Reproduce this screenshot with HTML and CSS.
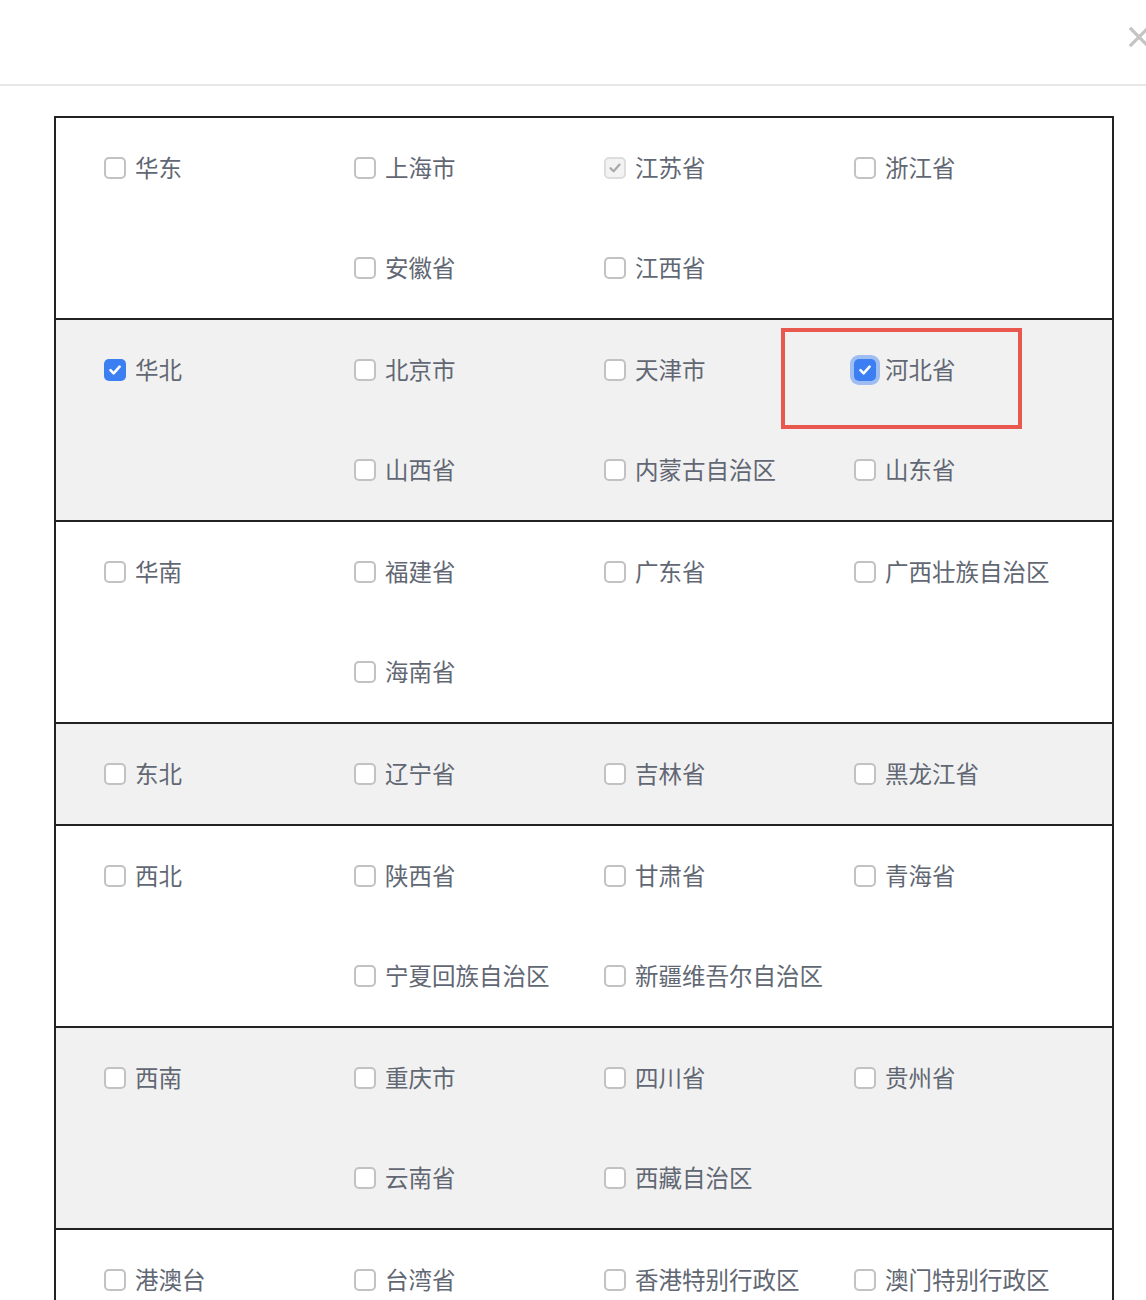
FILE: index.html
```html
<!DOCTYPE html>
<html lang="zh">
<head>
<meta charset="utf-8">
<title>地区选择</title>
<link rel="stylesheet" href="styles.css">
</head>
<body>
<div class="dialog">
  <header class="dialog-header">
    <svg class="close" width="22" height="22" viewBox="0 0 22 22"><path d="M3 3 L19 19 M19 3 L3 19" stroke="#c4c4c4" stroke-width="3.2" stroke-linecap="square"/></svg>
  </header>
  <div class="dialog-body">
    <div class="region-table">
      <div class="region-row">
        <div class="region"><label class="cb"><span class="box"></span><span class="txt">华东</span></label></div>
        <div class="provinces">
          <label class="cb"><span class="box"></span><span class="txt">上海市</span></label>
          <label class="cb"><span class="box disabled-checked"><svg viewBox="0 0 22 22"><path d="M6.5 11.2 L9.6 14.3 L15.6 7.6" fill="none" stroke="#a9a9a9" stroke-width="2.2" stroke-linecap="round" stroke-linejoin="round"/></svg></span><span class="txt">江苏省</span></label>
          <label class="cb"><span class="box"></span><span class="txt">浙江省</span></label>
          <label class="cb"><span class="box"></span><span class="txt">安徽省</span></label>
          <label class="cb"><span class="box"></span><span class="txt">江西省</span></label>
        </div>
      </div>
      <div class="region-row alt">
        <div class="region"><label class="cb"><span class="box checked"><svg viewBox="0 0 22 22"><path d="M6.5 11.2 L9.6 14.3 L15.6 7.6" fill="none" stroke="#fff" stroke-width="2.6" stroke-linecap="round" stroke-linejoin="round"/></svg></span><span class="txt">华北</span></label></div>
        <div class="provinces">
          <label class="cb"><span class="box"></span><span class="txt">北京市</span></label>
          <label class="cb"><span class="box"></span><span class="txt">天津市</span></label>
          <label class="cb highlighted"><span class="mark"></span><span class="box checked focus"><svg viewBox="0 0 22 22"><path d="M6.5 11.2 L9.6 14.3 L15.6 7.6" fill="none" stroke="#fff" stroke-width="2.6" stroke-linecap="round" stroke-linejoin="round"/></svg></span><span class="txt">河北省</span></label>
          <label class="cb"><span class="box"></span><span class="txt">山西省</span></label>
          <label class="cb"><span class="box"></span><span class="txt">内蒙古自治区</span></label>
          <label class="cb"><span class="box"></span><span class="txt">山东省</span></label>
        </div>
      </div>
      <div class="region-row">
        <div class="region"><label class="cb"><span class="box"></span><span class="txt">华南</span></label></div>
        <div class="provinces">
          <label class="cb"><span class="box"></span><span class="txt">福建省</span></label>
          <label class="cb"><span class="box"></span><span class="txt">广东省</span></label>
          <label class="cb"><span class="box"></span><span class="txt">广西壮族自治区</span></label>
          <label class="cb"><span class="box"></span><span class="txt">海南省</span></label>
        </div>
      </div>
      <div class="region-row alt">
        <div class="region"><label class="cb"><span class="box"></span><span class="txt">东北</span></label></div>
        <div class="provinces">
          <label class="cb"><span class="box"></span><span class="txt">辽宁省</span></label>
          <label class="cb"><span class="box"></span><span class="txt">吉林省</span></label>
          <label class="cb"><span class="box"></span><span class="txt">黑龙江省</span></label>
        </div>
      </div>
      <div class="region-row">
        <div class="region"><label class="cb"><span class="box"></span><span class="txt">西北</span></label></div>
        <div class="provinces">
          <label class="cb"><span class="box"></span><span class="txt">陕西省</span></label>
          <label class="cb"><span class="box"></span><span class="txt">甘肃省</span></label>
          <label class="cb"><span class="box"></span><span class="txt">青海省</span></label>
          <label class="cb"><span class="box"></span><span class="txt">宁夏回族自治区</span></label>
          <label class="cb"><span class="box"></span><span class="txt">新疆维吾尔自治区</span></label>
        </div>
      </div>
      <div class="region-row alt">
        <div class="region"><label class="cb"><span class="box"></span><span class="txt">西南</span></label></div>
        <div class="provinces">
          <label class="cb"><span class="box"></span><span class="txt">重庆市</span></label>
          <label class="cb"><span class="box"></span><span class="txt">四川省</span></label>
          <label class="cb"><span class="box"></span><span class="txt">贵州省</span></label>
          <label class="cb"><span class="box"></span><span class="txt">云南省</span></label>
          <label class="cb"><span class="box"></span><span class="txt">西藏自治区</span></label>
        </div>
      </div>
      <div class="region-row">
        <div class="region"><label class="cb"><span class="box"></span><span class="txt">港澳台</span></label></div>
        <div class="provinces">
          <label class="cb"><span class="box"></span><span class="txt">台湾省</span></label>
          <label class="cb"><span class="box"></span><span class="txt">香港特别行政区</span></label>
          <label class="cb"><span class="box"></span><span class="txt">澳门特别行政区</span></label>
        </div>
      </div>
    </div>
  </div>
</div>
</body>
</html>
```

FILE: styles.css
```css
html, body {
  margin: 0;
  padding: 0;
  background: #ffffff;
  overflow-x: hidden;
}
body {
  font-family: "Noto Sans CJK SC", "Noto Sans", sans-serif;
  color: #616773;
}
.dialog-header {
  height: 84px;
  border-bottom: 2px solid #e8e8e8;
  display: flex;
  justify-content: flex-end;
  align-items: flex-start;
}
.close {
  margin-top: 26px;
  margin-right: -4px;
  flex: none;
}
.dialog-body {
  padding: 30px 32px 0 54px;
}
.region-table {
  width: 1056px;
  border: 2px solid #222222;
  border-bottom: none;
}
.region-row {
  display: flex;
  padding-left: 48px;
  border-bottom: 2px solid #222222;
  background: #ffffff;
}
.region-row.alt {
  background: #f1f1f1;
}
.region {
  width: 250px;
  height: 100px;
  display: flex;
  align-items: center;
  flex: none;
}
.provinces {
  display: grid;
  grid-template-columns: repeat(3, 250px);
  grid-auto-rows: 100px;
}
.cb {
  display: flex;
  align-items: center;
  gap: 9px;
  font-size: 23.5px;
  line-height: 1;
  position: relative;
  white-space: nowrap;
}
.box {
  width: 22px;
  height: 22px;
  box-sizing: border-box;
  border: 2px solid #c2c2c2;
  border-radius: 5px;
  background: #ffffff;
  flex: none;
  display: flex;
  align-items: center;
  justify-content: center;
}
.box svg {
  width: 22px;
  height: 22px;
  flex: none;
}
.box.checked {
  border: none;
  background: #3b7ff3;
}
.box.disabled-checked {
  border: 2px solid #dddddd;
  background: #f3f3f3;
}
.box.disabled-checked svg {
  margin: -2px;
}
.box.focus {
  box-shadow: 0 0 0 4px rgba(90, 145, 240, 0.55);
}
.mark {
  position: absolute;
  left: -73px;
  top: 8px;
  width: 241px;
  height: 101px;
  box-sizing: border-box;
  border: 4px solid #e9584f;
  pointer-events: none;
}
.highlighted {
  align-self: stretch;
}
```
